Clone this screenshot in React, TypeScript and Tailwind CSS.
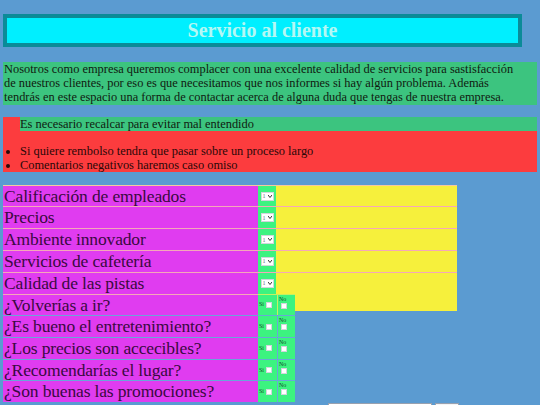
const ratings = [
  "Calificación de empleados",
  "Precios",
  "Ambiente innovador",
  "Servicios de cafetería",
  "Calidad de las pistas",
];

const questions = [
  "¿Volverías a ir?",
  "¿Es bueno el entretenimiento?",
  "¿Los precios son accecibles?",
  "¿Recomendarías el lugar?",
  "¿Son buenas las promociones?",
];

function FakeSelect() {
  return (
    <span className="flex h-[9px] w-[13px] items-center justify-between border border-gray-300 bg-white px-[1px] text-[6px] leading-none text-gray-500">
      <span>1</span>
      <svg width="4" height="3" viewBox="0 0 4 3">
        <path d="M0 0 L2 2.5 L4 0" fill="none" stroke="#333" strokeWidth="1" />
      </svg>
    </span>
  );
}

function Box() {
  return <span className="inline-block h-[6px] w-[6px] border border-gray-300 bg-white" />;
}

export default function App() {
  return (
    <div className="h-[405px] w-[540px] overflow-hidden bg-[#5b9bd1] px-[3px] pt-[14px] font-['Liberation_Serif',serif] text-black">
      {/* Header */}
      <div className="w-[519px] border-4 border-[#0b8b98] bg-[#00efff] py-[1px] text-center text-[20px] font-bold leading-[23px] text-[#b4f8f4]">
        Servicio al cliente
      </div>

      {/* Intro */}
      <p className="mt-[15px] bg-[#3cc47f] pl-[1px] pr-[20px] text-[12.4px] leading-[14.2px] text-[#101a10]">
        Nosotros como empresa queremos complacer con una excelente calidad de servicios para sastisfacción de nuestros clientes, por eso es que necesitamos que nos informes si hay algún problema. Además tendrás en este espacio una forma de contactar acerca de alguna duda que tengas de nuestra empresa.
      </p>

      {/* Notice */}
      <div className="mt-[12px] bg-[#fc3c3e] text-[12.4px] leading-[14px] text-[#2a0808]">
        <div className="ml-[17px] bg-[#3cc47f] text-[#101a10]">Es necesario recalcar para evitar mal entendido</div>
        <ul className="mt-[13px] list-disc pl-[17px]">
          <li>Si quiere rembolso tendra que pasar sobre un proceso largo</li>
          <li>Comentarios negativos haremos caso omiso</li>
        </ul>
      </div>

      {/* Ratings */}
      <div className="mt-[13px] w-[454px] bg-[#f6f03c]">
        {ratings.map((r, i) => (
          <div key={r} className={`flex h-[21.8px] ${i === 0 ? "border-t border-[#f5c8a0]" : "border-t border-[#f5a8b8]"}`}>
            <div className="w-[255px] bg-[#e03cf0] pl-[1px] text-[17.5px] leading-[21px] tracking-[-0.15px] text-[#3a0a40]">{r}</div>
            <div className="flex w-[18px] items-center justify-center bg-[#3cf380]">
              <FakeSelect />
            </div>
          </div>
        ))}
      </div>

      {/* Questions */}
      <div className="w-[454px]">
        {questions.map((q, i) => (
          <div key={q} className={`flex h-[21.7px] ${i === 0 ? "bg-[linear-gradient(#f6f03c_0_17px,transparent_17px)]" : ""}`}>
            <div className={`w-[255px] border-t bg-[#e03cf0] pl-[1px] text-[17.5px] leading-[21px] tracking-[-0.15px] text-[#3a0a40] ${i === 0 ? "border-[#f5a8b8]" : "border-[#6aa6d8]"}`}>{q}</div>
            <div className={`flex w-[19px] items-center gap-[2px] border-t bg-[#3cf380] pl-[1px] text-[6px] text-[#174a2a] ${i === 0 ? "border-[#c8f060]" : "border-[#6aa6d8]"}`}>
              <span>Si</span>
              <Box />
            </div>
            <div className={`flex w-[18px] flex-col items-start border-t border-l bg-[#3cf380] pl-[1px] pt-[1px] text-[6px] leading-[7px] text-[#174a2a] ${i === 0 ? "border-[#c8f060]" : "border-[#6aa6d8]"}`}>
              <span>No</span>
              <span className="ml-[2px]"><Box /></span>
            </div>
          </div>
        ))}
      </div>

      {/* Contact */}
      <div className="mt-px flex items-start text-[6px] leading-[8px]">
        <span className="w-[322px]">¿Usted tiene comentarios o quejas? Déjenos un mensaje en el siguiente espacio:</span>
        <span className="ml-[3px] h-[10px] w-[104px] border border-gray-400 bg-white" />
        <span className="ml-[3px] h-[10px] w-[24px] border border-gray-400 bg-gray-100" />
      </div>
    </div>
  );
}
